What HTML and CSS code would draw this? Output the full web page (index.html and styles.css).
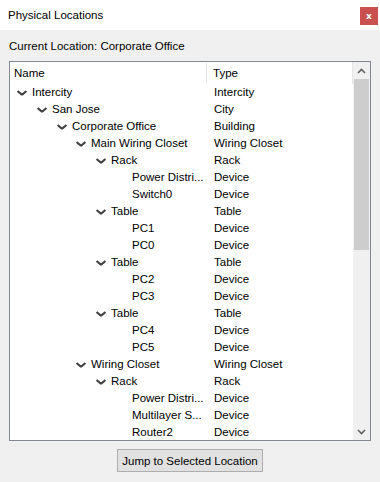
FILE: index.html
```html
<!DOCTYPE html>
<html lang="en">
  <head>
    <meta charset="UTF-8" />
    <meta name="viewport" content="width=device-width, initial-scale=1.0" />
    <title>Physical Locations</title>
    <link rel="stylesheet" href="styles.css">
  </head>
  <body>
    <div class="window">
      <div class="titlebar">
        <span class="title">Physical Locations</span>
        <button class="close" type="button">x</button>
      </div>

      <div class="content">
        <p class="current">Current Location: Corporate Office</p>

        <div class="tree">
          <div class="tree-body">
            <div class="tree-header">
              <div class="col-name">Name</div>
              <div class="col-type">Type</div>
            </div>

            <div class="row"><div class="name lvl-0"><span class="chev"></span>Intercity</div><div class="type">Intercity</div></div>
            <div class="row"><div class="name lvl-1"><span class="chev"></span>San Jose</div><div class="type">City</div></div>
            <div class="row"><div class="name lvl-2"><span class="chev"></span>Corporate Office</div><div class="type">Building</div></div>
            <div class="row"><div class="name lvl-3"><span class="chev"></span>Main Wiring Closet</div><div class="type">Wiring Closet</div></div>
            <div class="row"><div class="name lvl-4"><span class="chev"></span>Rack</div><div class="type">Rack</div></div>
            <div class="row"><div class="name lvl-5">Power Distri...</div><div class="type">Device</div></div>
            <div class="row"><div class="name lvl-5">Switch0</div><div class="type">Device</div></div>
            <div class="row"><div class="name lvl-4"><span class="chev"></span>Table</div><div class="type">Table</div></div>
            <div class="row"><div class="name lvl-5">PC1</div><div class="type">Device</div></div>
            <div class="row"><div class="name lvl-5">PC0</div><div class="type">Device</div></div>
            <div class="row"><div class="name lvl-4"><span class="chev"></span>Table</div><div class="type">Table</div></div>
            <div class="row"><div class="name lvl-5">PC2</div><div class="type">Device</div></div>
            <div class="row"><div class="name lvl-5">PC3</div><div class="type">Device</div></div>
            <div class="row"><div class="name lvl-4"><span class="chev"></span>Table</div><div class="type">Table</div></div>
            <div class="row"><div class="name lvl-5">PC4</div><div class="type">Device</div></div>
            <div class="row"><div class="name lvl-5">PC5</div><div class="type">Device</div></div>
            <div class="row"><div class="name lvl-3"><span class="chev"></span>Wiring Closet</div><div class="type">Wiring Closet</div></div>
            <div class="row"><div class="name lvl-4"><span class="chev"></span>Rack</div><div class="type">Rack</div></div>
            <div class="row"><div class="name lvl-5">Power Distri...</div><div class="type">Device</div></div>
            <div class="row"><div class="name lvl-5">Multilayer S...</div><div class="type">Device</div></div>
            <div class="row"><div class="name lvl-5">Router2</div><div class="type">Device</div></div>
          </div>

          <div class="scrollbar">
            <div class="arrow">
              <svg width="9" height="6" viewBox="0 0 9 6"><path d="M1 5 L4.5 1.5 L8 5" fill="none" stroke="#606060" stroke-width="1.6"/></svg>
            </div>
            <div class="track">
              <div class="thumb"></div>
            </div>
            <div class="arrow">
              <svg width="9" height="6" viewBox="0 0 9 6"><path d="M1 1 L4.5 4.5 L8 1" fill="none" stroke="#606060" stroke-width="1.6"/></svg>
            </div>
          </div>
        </div>

        <div class="actions">
          <button class="jump" type="button">Jump to Selected Location</button>
        </div>
      </div>
    </div>
  </body>
</html>
```

FILE: styles.css
```css
/* Dialog window */
body {
  margin: 0;
  background: #f0f0f0;
  font-family: "Liberation Sans", Arial, sans-serif;
  font-size: 11.5px;
  color: #000;
}

.window {
  width: 380px;
  height: 482px;
  display: flex;
  flex-direction: column;
}

.titlebar {
  height: 30px;
  background: #fff;
  display: flex;
  align-items: center;
  justify-content: space-between;
  padding: 0 2px 0 8px;
  box-sizing: border-box;
}

.close {
  width: 18px;
  height: 18px;
  margin-top: 2px;
  padding: 0;
  border: none;
  background: #c9504e;
  color: #fff;
  font-family: "DejaVu Sans", sans-serif;
  font-size: 9px;
  font-weight: bold;
  line-height: 18px;
}

.content {
  flex: 1;
  padding: 0 9px;
  display: flex;
  flex-direction: column;
}

.current {
  margin: 9px 0 8px;
  line-height: 14px;
}

/* Tree view */
.tree {
  height: 380px;
  border: 1px solid #828790;
  background: #fff;
  display: flex;
  box-sizing: border-box;
  overflow: hidden;
}

.tree-body {
  flex: 1;
}

.tree-header {
  display: grid;
  grid-template-columns: 197px 1fr;
  height: 22px;
  align-items: center;
  border-right: 1px solid #e5e5e5;
}

.col-name {
  padding-left: 4px;
  border-right: 1px solid #e5e5e5;
  line-height: 20px;
}

.col-type {
  padding-left: 6px;
}

.row {
  display: grid;
  grid-template-columns: 197px 1fr;
  height: 17px;
  line-height: 17px;
  white-space: nowrap;
}

.type {
  padding-left: 7px;
}

.name {
  display: flex;
  align-items: center;
}

/* expanded node chevron */
.chev {
  position: relative;
  width: 8px;
  height: 8px;
  margin: 1px 6px 0 -15px;
}

.chev::before,
.chev::after {
  content: "";
  position: absolute;
  top: 3px;
  width: 6px;
  height: 1.5px;
  background: #404040;
}

.chev::before {
  left: -1px;
  transform: rotate(40deg);
}

.chev::after {
  left: 3px;
  transform: rotate(-40deg);
}

.lvl-0 { padding-left: 23px; }
.lvl-1 { padding-left: 43px; }
.lvl-2 { padding-left: 63px; }
.lvl-3 { padding-left: 82px; }
.lvl-4 { padding-left: 102px; }
.lvl-5 { padding-left: 122px; }

/* Scroll bar */
.scrollbar {
  width: 17px;
  background: #f0f0f0;
  display: flex;
  flex-direction: column;
}

.arrow {
  height: 17px;
  display: flex;
  align-items: center;
  justify-content: center;
}

.track {
  flex: 1;
}

.thumb {
  height: 171px;
  margin: 0 1px;
  background: #cdcdcd;
}

/* Bottom button */
.actions {
  display: flex;
  justify-content: center;
  padding-top: 8px;
}

.jump {
  height: 23px;
  padding: 0 4px;
  background: #e1e1e1;
  border: 1px solid #adadad;
  font-family: "Liberation Sans", Arial, sans-serif;
  font-size: 11.5px;
  color: #000;
}
```
